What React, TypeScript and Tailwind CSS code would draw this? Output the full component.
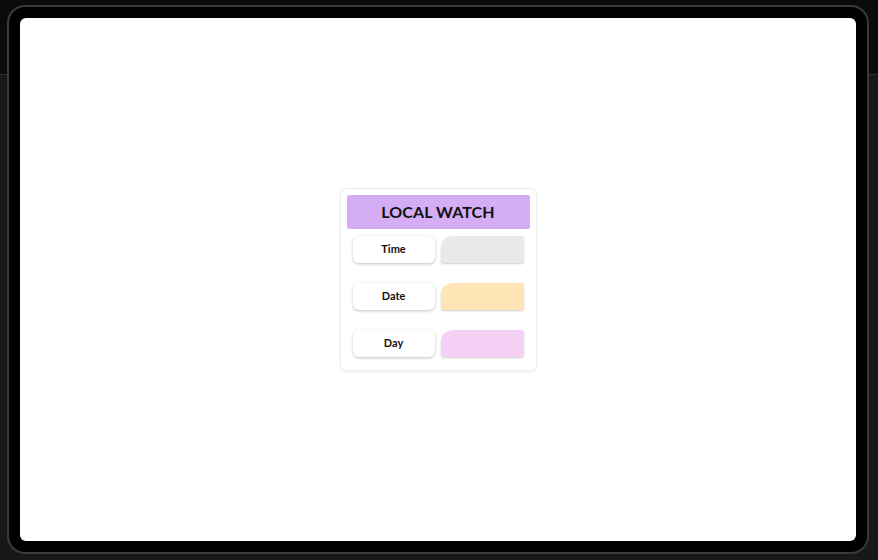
import React from "react";

const rows = [
  { label: "Time", bg: "bg-[#e9e9e9]" },
  { label: "Date", bg: "bg-[#ffe5b5]" },
  { label: "Day", bg: "bg-[#f6d1f6]" },
];

export default function App() {
  return (
    <div className="relative h-[560px] w-[878px] overflow-hidden bg-[#181818] font-['Lato',sans-serif]">
      <div className="h-[75px] border-b border-[#2c2c2c] bg-[#0b0b0b]" />
      <div className="absolute left-[7px] top-[5px] flex h-[549px] w-[862px] rounded-[18px] border-2 border-[#3a3a3a] bg-black p-[11px]">
        <div className="flex flex-1 items-center justify-center rounded-[6px] bg-white">
          <div className="flex h-[183px] w-[197px] flex-col rounded-[6px] border border-[#ececec] bg-white px-[6px] pt-[6px] shadow-[0_1px_3px_rgba(0,0,0,0.06)]">
            <div className="flex h-[34px] items-center justify-center rounded-[2px] bg-[#d4adf4] text-[16px] font-bold tracking-[0.1px] text-[#111]">
              LOCAL WATCH
            </div>
            <div className="mt-[7px] flex flex-col gap-[20px] px-[6px]">
              {rows.map((r) => (
                <div key={r.label} className="flex gap-[6px]">
                  <div className="flex h-[27px] w-[82px] shrink-0 items-center justify-center rounded-[6px] bg-white text-[11px] font-bold text-[#111] shadow-[0_1px_3px_rgba(0,0,0,0.25)]">
                    {r.label}
                  </div>
                  <div
                    className={`h-[27px] w-[83px] shrink-0 rounded-tl-[12px] rounded-tr-[3px] rounded-br-[3px] rounded-bl-[3px] ${r.bg} shadow-[0_1px_2px_rgba(0,0,0,0.2)]`}
                  />
                </div>
              ))}
            </div>
          </div>
        </div>
      </div>
    </div>
  );
}
